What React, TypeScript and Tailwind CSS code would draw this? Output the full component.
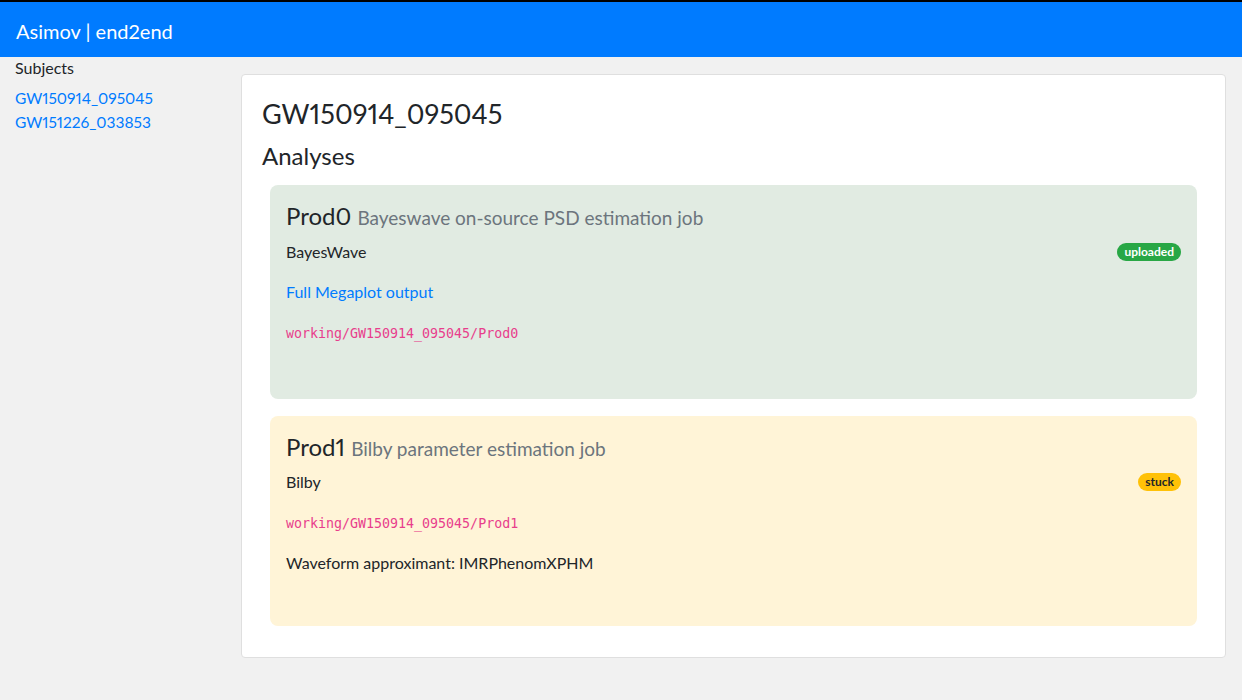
import React from 'react';

const SANS = "font-['Lato',sans-serif]";

type Analysis = {
  name: string;
  comment: string;
  pipeline: string;
  status: string;
  tone: 'green' | 'yellow';
  link?: string;
  dir: string;
  approximant?: string;
};

const ANALYSES: Analysis[] = [
  {
    name: 'Prod0',
    comment: 'Bayeswave on-source PSD estimation job',
    pipeline: 'BayesWave',
    status: 'uploaded',
    tone: 'green',
    link: 'Full Megaplot output',
    dir: 'working/GW150914_095045/Prod0',
  },
  {
    name: 'Prod1',
    comment: 'Bilby parameter estimation job',
    pipeline: 'Bilby',
    status: 'stuck',
    tone: 'yellow',
    dir: 'working/GW150914_095045/Prod1',
    approximant: 'IMRPhenomXPHM',
  },
];

function AnalysisCard({ a }: { a: Analysis }) {
  const bg = a.tone === 'green' ? 'bg-[#e1ebe2]' : 'bg-[#fff4d7]';
  const badge =
    a.tone === 'green' ? 'bg-[#28a745] text-white' : 'bg-[#ffc107] text-[#212529]';
  return (
    <div className={`${bg} rounded-lg px-4 pt-[17px] pb-[37px]`}>
      <h4 className="text-[24px] leading-[1.2] mb-[9px] text-[#212529]">
        {a.name} <small className="text-[19px] text-[#6c757d]">{a.comment}</small>
      </h4>
      <div className="flex items-center justify-between mb-4">
        <span className="text-[16px] leading-6">{a.pipeline}</span>
        <span
          className={`${badge} rounded-full px-[7px] text-[12px] leading-[18px] font-bold`}
        >
          {a.status}
        </span>
      </div>
      {a.link && (
        <p className="mb-4 leading-6">
          <a href="#" className="text-[#007bff]">
            {a.link}
          </a>
        </p>
      )}
      <p className="mb-4 leading-6">
        <code className="font-['DejaVu_Sans_Mono',monospace] text-[13.3px] text-[#e83e8c]">
          {a.dir}
        </code>
      </p>
      {a.approximant && (
        <p className="-mt-px mb-[14px] leading-6">Waveform approximant: {a.approximant}</p>
      )}
    </div>
  );
}

export default function App() {
  return (
    <div className={`${SANS} proportional-nums min-h-[700px] bg-[#f1f1f1] text-[#212529] text-[16px]`}>
      <nav className="border-t-2 border-black bg-[#007bff] h-[57px] flex items-center px-4 pt-[3px]">
        <span className="text-white text-[20px]">Asimov | end2end</span>
      </nav>
      <div className="flex">
        <aside className="w-[241px] shrink-0 pl-[15px]">
          <div className="leading-[22px] mb-[7px]">Subjects</div>
          <ul className="text-[15.5px]">
            <li className="leading-6">
              <a href="#" className="text-[#007bff]">
                GW150914_095045
              </a>
            </li>
            <li className="leading-6">
              <a href="#" className="text-[#007bff]">
                GW151226_033853
              </a>
            </li>
          </ul>
        </aside>
        <main className="flex-1 pr-4 pt-[17px]">
          <div className="bg-white border border-[#dfdfdf] rounded pl-5 pr-7 pt-[22px] pb-[31px]">
            <h2 className="text-[27px] leading-[33px] mb-3">GW150914_095045</h2>
            <h4 className="text-[24px] leading-[1.2] mb-[14px]">Analyses</h4>
            <div className="pl-2 flex flex-col gap-[17px]">
              {ANALYSES.map((a) => (
                <AnalysisCard key={a.name} a={a} />
              ))}
            </div>
          </div>
        </main>
      </div>
    </div>
  );
}
